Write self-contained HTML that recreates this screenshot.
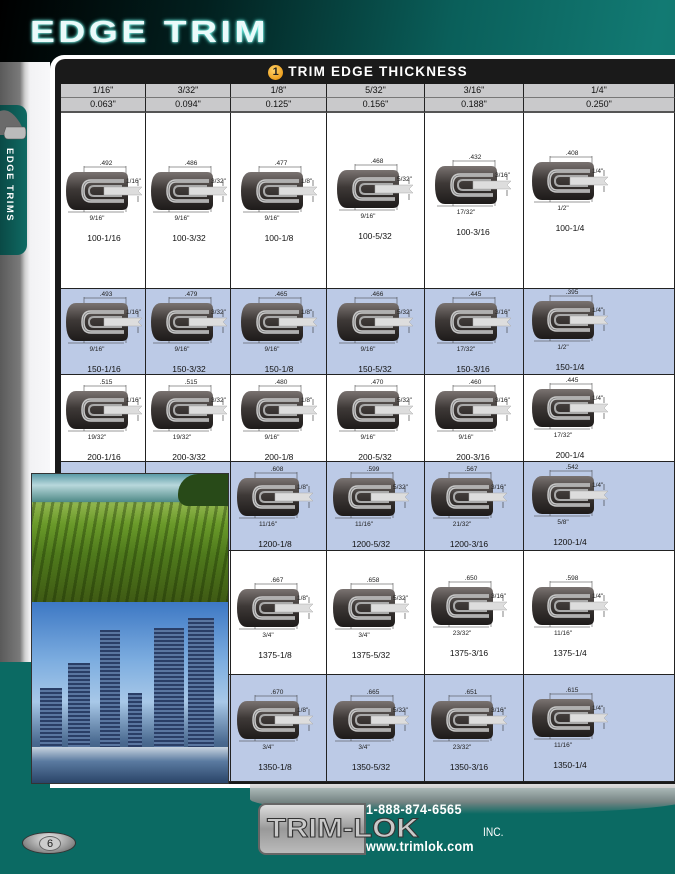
<!DOCTYPE html>
<html><head><meta charset="utf-8"><style>
*{margin:0;padding:0;box-sizing:border-box}
body{width:675px;height:874px;overflow:hidden;position:relative;font-family:"Liberation Sans",sans-serif;background:#0b6a63}
#bg{position:absolute;left:0;top:0;width:675px;height:874px;background:linear-gradient(100deg,#000 0%,#02201f 25%,#0a5f5a 55%,#127a73 80%,#0f6e68 100%)}
#bgl{position:absolute;left:0;top:140px;width:675px;height:734px;background:#0b6a63}
#title{position:absolute;left:30px;top:14px;font-size:31px;font-weight:bold;color:#eafafa;letter-spacing:3px;transform:scaleX(1.2);transform-origin:left top;text-shadow:0 0 4px #6fe,0 0 2px #aff;font-family:"Liberation Sans",sans-serif}
#strip{position:absolute;left:0;top:62px;width:50px;height:600px;background:linear-gradient(90deg,#5a5a5a 0,#7a7a7a 20px,#cfcfcf 25px,#f2f2f4 30px,#f8f8fa 50px)}
#tab{position:absolute;left:0;top:105px;width:27px;height:150px;background:linear-gradient(90deg,#0a4a46,#0f6a63);border-radius:0 10px 10px 0}
#tabt{position:absolute;left:4px;top:148px;color:#fff;font-size:9.5px;font-weight:bold;letter-spacing:1.5px;writing-mode:vertical-rl;}
#panel{position:absolute;left:50px;top:55px;width:640px;height:733px;background:#fff;border-radius:14px 0 0 0}
#frame{position:absolute;left:55px;top:59px;width:630px;height:725px;background:#1a1a1a;border-radius:10px 0 0 0}
#hdr{position:absolute;left:61px;top:60px;width:614px;height:24px;color:#fff;text-align:center;font-size:13.5px;font-weight:bold;letter-spacing:1.2px;line-height:24px}
#hdr b{display:inline-block;width:15px;height:15px;border-radius:50%;background:radial-gradient(circle at 40% 35%,#ffd36a,#e58a00);color:#222;font-size:11px;line-height:15px;vertical-align:1px;margin-right:5px;letter-spacing:0}
.c{position:absolute;border-right:1px solid #222;border-bottom:1px solid #222;overflow:hidden}
.h{background:#c9c9cb;font-size:9px;text-align:center;color:#111;border-bottom:2px solid #555}
.w{background:#fff}.b{background:#bccae6}
.blk{position:absolute;width:80px;height:88px}
.blk svg{position:absolute;left:0;top:6px;width:80px;height:50px}
.td{position:absolute;left:22px;top:0;width:40px;text-align:center;font-size:6.5px;color:#222}
.fr{position:absolute;left:62px;top:18px;font-size:6.5px;color:#222}
.bd{position:absolute;left:4px;top:55px;width:58px;text-align:center;font-size:6.5px;color:#222}
.pl{position:absolute;left:-10px;top:73px;width:100px;text-align:center;font-size:8.5px;color:#111}
#photo{position:absolute;left:31px;top:473px;width:198px;height:311px;border:1px solid #333}
#p1{position:absolute;left:0;top:0;width:196px;height:128px;background:repeating-linear-gradient(100deg,rgba(0,0,0,0) 0 6px,rgba(20,40,0,.35) 6px 9px),linear-gradient(180deg,#5a9aa6 0,#a9cfd6 12px,#4f8a88 22px,#8fb44c 30px,#6a9a2a 50px,#4f7a1c 80px,#3f5a14 128px)}
#p1 i{position:absolute;right:0;top:0;width:50px;height:32px;background:#284a18;border-radius:20px 0 0 10px}
#p1 u{position:absolute;left:0;top:0;width:196px;height:28px;background:linear-gradient(180deg,#5a9aa6,#b8d8dc 40%,#4f8a88)}
#p2{position:absolute;left:0;top:128px;width:196px;height:181px;background:linear-gradient(180deg,#3d78c4 0,#7eaee0 60px,#a8c8e8 100px,#4a6a90 140px,#2a3e5a 181px)}
.bld{position:absolute;bottom:35px;background:repeating-linear-gradient(180deg,#2a3e66 0 2px,#5a76a0 2px 4px)}
#shadow{position:absolute;left:250px;top:784px;width:440px;height:30px;border-radius:0 0 50% 50%;background:linear-gradient(180deg,#d8d8d8,#888 60%,transparent);opacity:.85}
#logo{position:absolute;left:258px;top:803px;width:108px;height:52px;border-radius:8px 0 0 8px;background:linear-gradient(180deg,#ddd,#999 50%,#bbb);border:2px solid #666}
#logot{position:absolute;left:267px;top:813px;font-size:27px;font-weight:bold;color:#c9c9c9;letter-spacing:0px;transform:scaleX(1.15);transform-origin:left top;-webkit-text-stroke:1px #333;line-height:30px}
#ph{position:absolute;left:366px;top:801px;font-size:14px;font-weight:bold;color:#fff;letter-spacing:.5px;transform:scaleX(.9);transform-origin:left top}
#www{position:absolute;left:366px;top:838px;font-size:14px;font-weight:bold;color:#fff;letter-spacing:.3px;transform:scaleX(.9);transform-origin:left top}
#inc{position:absolute;left:483px;top:825px;font-size:12px;color:#fff;transform:scaleX(.85);transform-origin:left top}
#pg{position:absolute;left:22px;top:832px;width:54px;height:22px;border-radius:50%;background:radial-gradient(ellipse at 50% 30%,#eee,#888 70%,#444);border:1px solid #333}
#pg b{position:absolute;left:16px;top:3px;width:22px;height:15px;border-radius:50%;background:#ccc;border:1px solid #666;font-size:11px;font-weight:normal;text-align:center;line-height:14px;color:#222}
</style></head><body>
<svg width="0" height="0" style="position:absolute"><defs>
<linearGradient id="g" x1="0" y1="0" x2="0" y2="1"><stop offset="0" stop-color="#7a7371"/><stop offset=".45" stop-color="#3e3937"/><stop offset="1" stop-color="#1e1b1a"/></linearGradient>
<symbol id="t" viewBox="0 0 80 50">
<line x1="20" y1="0" x2="20" y2="46" stroke="#333" stroke-width=".5"/>
<line x1="62" y1="0" x2="62" y2="46" stroke="#333" stroke-width=".5"/>
<path d="M20 1 H62 M4 46 H60" stroke="#333" stroke-width=".5"/>
<path d="M74 14 V20 M74 30 V36" stroke="#333" stroke-width=".6"/>
<path d="M12 6 H58 Q64 6 64 12 V38 Q64 44 58 44 H12 Q2 44 2 25 Q2 6 12 6 Z" fill="url(#g)"/>
<path d="M40 21 H78 L74 25 L78 29 H40 Z" fill="#ddd" stroke="#aaa" stroke-width=".5"/>
<path d="M60 15 H27 Q19 15 19 25 Q19 35 27 35 H60" fill="none" stroke="#c8c8c8" stroke-width="3.5"/>
<path d="M60 15 H27 Q19 15 19 25 Q19 35 27 35 H60" fill="none" stroke="#666" stroke-width=".6"/>
<path d="M58 20 H30 Q25 20 25 25 Q25 30 30 30 H58" fill="none" stroke="#aaa" stroke-width="2"/>
</symbol></defs></svg>
<div id="bg"></div><div id="bgl"></div>
<div id="title">EDGE TRIM</div>
<div id="strip"></div>
<div id="tab"><svg width="27" height="40" viewBox="0 0 27 40" style="position:absolute;left:0;top:0"><path d="M0 6 Q10 2 20 18 L26 30 H0Z" fill="#6a6a6a"/><path d="M6 22 H24 Q26 22 26 28 Q26 34 22 34 H8 Q4 34 4 28Z" fill="#bbb" stroke="#555" stroke-width=".6"/></svg></div>
<div id="tabt">EDGE TRIMS</div>
<div id="panel"></div><div id="frame"></div>
<div id="hdr"><b>1</b>TRIM EDGE THICKNESS</div>
<div id="t">
<div class="c h" style="left:61px;top:84px;width:85px;height:14px;line-height:12px;border-bottom:1px solid #777">1/16"</div>
<div class="c h" style="left:146px;top:84px;width:85px;height:14px;line-height:12px;border-bottom:1px solid #777">3/32"</div>
<div class="c h" style="left:231px;top:84px;width:96px;height:14px;line-height:12px;border-bottom:1px solid #777">1/8"</div>
<div class="c h" style="left:327px;top:84px;width:98px;height:14px;line-height:12px;border-bottom:1px solid #777">5/32"</div>
<div class="c h" style="left:425px;top:84px;width:99px;height:14px;line-height:12px;border-bottom:1px solid #777">3/16"</div>
<div class="c h" style="left:524px;top:84px;width:151px;height:14px;line-height:12px;border-bottom:1px solid #777">1/4"</div>
<div class="c h" style="left:61px;top:98px;width:85px;height:15px;line-height:12px">0.063"</div>
<div class="c h" style="left:146px;top:98px;width:85px;height:15px;line-height:12px">0.094"</div>
<div class="c h" style="left:231px;top:98px;width:96px;height:15px;line-height:12px">0.125"</div>
<div class="c h" style="left:327px;top:98px;width:98px;height:15px;line-height:12px">0.156"</div>
<div class="c h" style="left:425px;top:98px;width:99px;height:15px;line-height:12px">0.188"</div>
<div class="c h" style="left:524px;top:98px;width:151px;height:15px;line-height:12px">0.250"</div>

<!-- row1 -->
<div class="c w" style="left:61px;top:113px;width:85px;height:176px"><div class="blk" style="left:3px;top:47px"><div class="td">.492</div><svg><use href="#t"/></svg><div class="fr">1/16"</div><div class="bd">9/16"</div><div class="pl">100-1/16</div></div></div>
<div class="c w" style="left:146px;top:113px;width:85px;height:176px"><div class="blk" style="left:3px;top:47px"><div class="td">.486</div><svg><use href="#t"/></svg><div class="fr">3/32"</div><div class="bd">9/16"</div><div class="pl">100-3/32</div></div></div>
<div class="c w" style="left:231px;top:113px;width:96px;height:176px"><div class="blk" style="left:8px;top:47px"><div class="td">.477</div><svg><use href="#t"/></svg><div class="fr">1/8"</div><div class="bd">9/16"</div><div class="pl">100-1/8</div></div></div>
<div class="c w" style="left:327px;top:113px;width:98px;height:176px"><div class="blk" style="left:8px;top:45px"><div class="td">.468</div><svg><use href="#t"/></svg><div class="fr">5/32"</div><div class="bd">9/16"</div><div class="pl">100-5/32</div></div></div>
<div class="c w" style="left:425px;top:113px;width:99px;height:176px"><div class="blk" style="left:8px;top:41px"><div class="td">.432</div><svg><use href="#t"/></svg><div class="fr">3/16"</div><div class="bd">17/32"</div><div class="pl">100-3/16</div></div></div>
<div class="c w" style="left:524px;top:113px;width:151px;height:176px"><div class="blk" style="left:6px;top:37px"><div class="td">.408</div><svg><use href="#t"/></svg><div class="fr">1/4"</div><div class="bd">1/2"</div><div class="pl">100-1/4</div></div></div>
<!-- row2 -->
<div class="c b" style="left:61px;top:289px;width:85px;height:86px"><div class="blk" style="left:3px;top:2px"><div class="td">.493</div><svg><use href="#t"/></svg><div class="fr">1/16"</div><div class="bd">9/16"</div><div class="pl">150-1/16</div></div></div>
<div class="c b" style="left:146px;top:289px;width:85px;height:86px"><div class="blk" style="left:3px;top:2px"><div class="td">.479</div><svg><use href="#t"/></svg><div class="fr">3/32"</div><div class="bd">9/16"</div><div class="pl">150-3/32</div></div></div>
<div class="c b" style="left:231px;top:289px;width:96px;height:86px"><div class="blk" style="left:8px;top:2px"><div class="td">.465</div><svg><use href="#t"/></svg><div class="fr">1/8"</div><div class="bd">9/16"</div><div class="pl">150-1/8</div></div></div>
<div class="c b" style="left:327px;top:289px;width:98px;height:86px"><div class="blk" style="left:8px;top:2px"><div class="td">.466</div><svg><use href="#t"/></svg><div class="fr">5/32"</div><div class="bd">9/16"</div><div class="pl">150-5/32</div></div></div>
<div class="c b" style="left:425px;top:289px;width:99px;height:86px"><div class="blk" style="left:8px;top:2px"><div class="td">.445</div><svg><use href="#t"/></svg><div class="fr">3/16"</div><div class="bd">17/32"</div><div class="pl">150-3/16</div></div></div>
<div class="c b" style="left:524px;top:289px;width:151px;height:86px"><div class="blk" style="left:6px;top:0px"><div class="td">.395</div><svg><use href="#t"/></svg><div class="fr">1/4"</div><div class="bd">1/2"</div><div class="pl">150-1/4</div></div></div>
<!-- row3 -->
<div class="c w" style="left:61px;top:375px;width:85px;height:87px"><div class="blk" style="left:3px;top:4px"><div class="td">.515</div><svg><use href="#t"/></svg><div class="fr">1/16"</div><div class="bd">19/32"</div><div class="pl">200-1/16</div></div></div>
<div class="c w" style="left:146px;top:375px;width:85px;height:87px"><div class="blk" style="left:3px;top:4px"><div class="td">.515</div><svg><use href="#t"/></svg><div class="fr">3/32"</div><div class="bd">19/32"</div><div class="pl">200-3/32</div></div></div>
<div class="c w" style="left:231px;top:375px;width:96px;height:87px"><div class="blk" style="left:8px;top:4px"><div class="td">.480</div><svg><use href="#t"/></svg><div class="fr">1/8"</div><div class="bd">9/16"</div><div class="pl">200-1/8</div></div></div>
<div class="c w" style="left:327px;top:375px;width:98px;height:87px"><div class="blk" style="left:8px;top:4px"><div class="td">.470</div><svg><use href="#t"/></svg><div class="fr">5/32"</div><div class="bd">9/16"</div><div class="pl">200-5/32</div></div></div>
<div class="c w" style="left:425px;top:375px;width:99px;height:87px"><div class="blk" style="left:8px;top:4px"><div class="td">.460</div><svg><use href="#t"/></svg><div class="fr">3/16"</div><div class="bd">9/16"</div><div class="pl">200-3/16</div></div></div>
<div class="c w" style="left:524px;top:375px;width:151px;height:87px"><div class="blk" style="left:6px;top:2px"><div class="td">.445</div><svg><use href="#t"/></svg><div class="fr">1/4"</div><div class="bd">17/32"</div><div class="pl">200-1/4</div></div></div>
<!-- row4 -->
<div class="c b" style="left:61px;top:462px;width:85px;height:89px"></div>
<div class="c b" style="left:146px;top:462px;width:85px;height:89px"></div>
<div class="c b" style="left:231px;top:462px;width:96px;height:89px"><div class="blk" style="left:4px;top:4px"><div class="td">.608</div><svg><use href="#t"/></svg><div class="fr">1/8"</div><div class="bd">11/16"</div><div class="pl">1200-1/8</div></div></div>
<div class="c b" style="left:327px;top:462px;width:98px;height:89px"><div class="blk" style="left:4px;top:4px"><div class="td">.599</div><svg><use href="#t"/></svg><div class="fr">5/32"</div><div class="bd">11/16"</div><div class="pl">1200-5/32</div></div></div>
<div class="c b" style="left:425px;top:462px;width:99px;height:89px"><div class="blk" style="left:4px;top:4px"><div class="td">.567</div><svg><use href="#t"/></svg><div class="fr">3/16"</div><div class="bd">21/32"</div><div class="pl">1200-3/16</div></div></div>
<div class="c b" style="left:524px;top:462px;width:151px;height:89px"><div class="blk" style="left:6px;top:2px"><div class="td">.542</div><svg><use href="#t"/></svg><div class="fr">1/4"</div><div class="bd">5/8"</div><div class="pl">1200-1/4</div></div></div>
<!-- row5 -->
<div class="c w" style="left:61px;top:551px;width:85px;height:124px"></div>
<div class="c w" style="left:146px;top:551px;width:85px;height:124px"></div>
<div class="c w" style="left:231px;top:551px;width:96px;height:124px"><div class="blk" style="left:4px;top:26px"><div class="td">.667</div><svg><use href="#t"/></svg><div class="fr">1/8"</div><div class="bd">3/4"</div><div class="pl">1375-1/8</div></div></div>
<div class="c w" style="left:327px;top:551px;width:98px;height:124px"><div class="blk" style="left:4px;top:26px"><div class="td">.658</div><svg><use href="#t"/></svg><div class="fr">5/32"</div><div class="bd">3/4"</div><div class="pl">1375-5/32</div></div></div>
<div class="c w" style="left:425px;top:551px;width:99px;height:124px"><div class="blk" style="left:4px;top:24px"><div class="td">.650</div><svg><use href="#t"/></svg><div class="fr">3/16"</div><div class="bd">23/32"</div><div class="pl">1375-3/16</div></div></div>
<div class="c w" style="left:524px;top:551px;width:151px;height:124px"><div class="blk" style="left:6px;top:24px"><div class="td">.598</div><svg><use href="#t"/></svg><div class="fr">1/4"</div><div class="bd">11/16"</div><div class="pl">1375-1/4</div></div></div>
<!-- row6 -->
<div class="c b" style="left:61px;top:675px;width:85px;height:107px"></div>
<div class="c b" style="left:146px;top:675px;width:85px;height:107px"></div>
<div class="c b" style="left:231px;top:675px;width:96px;height:107px"><div class="blk" style="left:4px;top:14px"><div class="td">.670</div><svg><use href="#t"/></svg><div class="fr">1/8"</div><div class="bd">3/4"</div><div class="pl">1350-1/8</div></div></div>
<div class="c b" style="left:327px;top:675px;width:98px;height:107px"><div class="blk" style="left:4px;top:14px"><div class="td">.665</div><svg><use href="#t"/></svg><div class="fr">5/32"</div><div class="bd">3/4"</div><div class="pl">1350-5/32</div></div></div>
<div class="c b" style="left:425px;top:675px;width:99px;height:107px"><div class="blk" style="left:4px;top:14px"><div class="td">.651</div><svg><use href="#t"/></svg><div class="fr">3/16"</div><div class="bd">23/32"</div><div class="pl">1350-3/16</div></div></div>
<div class="c b" style="left:524px;top:675px;width:151px;height:107px"><div class="blk" style="left:6px;top:12px"><div class="td">.615</div><svg><use href="#t"/></svg><div class="fr">1/4"</div><div class="bd">11/16"</div><div class="pl">1350-1/4</div></div></div>
</div>
<div id="photo"><div id="p1"><u></u><i></i></div><div id="p2">
<div class="bld" style="left:8px;width:22px;height:60px"></div>
<div class="bld" style="left:36px;width:22px;height:85px"></div>
<div class="bld" style="left:68px;width:20px;height:118px"></div>
<div class="bld" style="left:96px;width:14px;height:55px"></div>
<div class="bld" style="left:122px;width:30px;height:120px"></div>
<div class="bld" style="left:156px;width:26px;height:130px"></div>
<div style="position:absolute;left:0;bottom:0;width:196px;height:36px;background:linear-gradient(180deg,#c8d4e0,#5a7aa0 40%,#2a4468)"></div>
</div></div>
<div id="shadow"></div>
<div id="logo"></div>
<div id="logot">TRIM-LOK</div>
<div id="ph">1-888-874-6565</div>
<div id="www">www.trimlok.com</div>
<div id="inc">INC.</div>
<div id="pg"><b>6</b></div>
</body></html>
